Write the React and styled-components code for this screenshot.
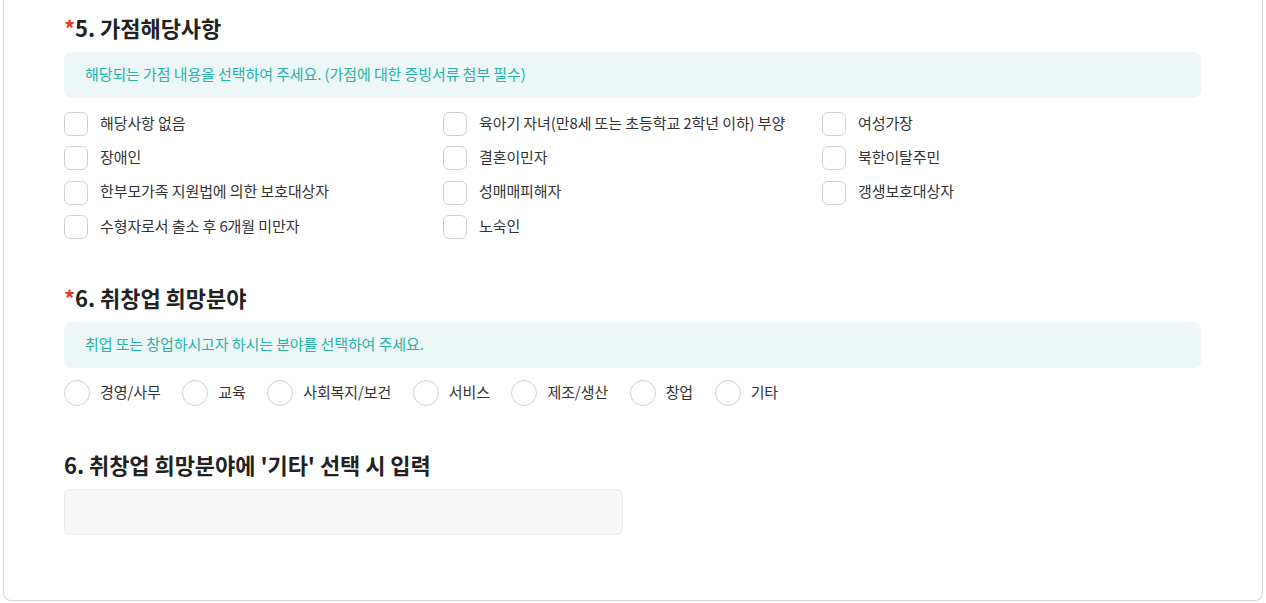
import React from 'react';
import styled, { createGlobalStyle } from 'styled-components';

const GlobalStyle = createGlobalStyle`
  * { box-sizing: border-box; }
  body {
    margin: 0;
    background: #ffffff;
    font-family: "Noto Sans CJK KR", "Noto Sans", sans-serif;
    color: #333333;
  }
`;

const Page = styled.div`
  padding: 0 3px;
`;

const Card = styled.div`
  width: 1260px;
  border: 1px solid #d6d6d6;
  border-top: none;
  border-radius: 0 0 8px 8px;
  padding: 12px 61px 65px 60px;
`;

const Section = styled.section`
  & + & {
    margin-top: 43px;
  }
`;

const Title = styled.h2`
  margin: 0 0 8px;
  font-size: 22px;
  line-height: 30px;
  padding-bottom: 2px;
  font-weight: 700;
  color: #222222;
  letter-spacing: -0.05px;
`;

const Required = styled.span`
  color: #e5392f;
  font-weight: 700;
`;

const Notice = styled.div`
  height: 46px;
  line-height: 44px;
  padding: 0 21px 2px;
  background: #edf7f8;
  border-radius: 7px;
  color: #26b3a5;
  font-size: 15px;
  letter-spacing: -0.1px;
`;

const CheckGrid = styled.div`
  margin-top: 14px;
  display: grid;
  grid-template-columns: repeat(3, 379px);
  grid-auto-rows: 24px;
  row-gap: 10.4px;
`;

const Option = styled.label`
  display: flex;
  align-items: center;
  gap: ${p => (p.$round ? '10px' : '12px')};
  font-size: 15px;
  letter-spacing: -0.1px;
  color: #333333;
  white-space: nowrap;
`;

const OptionText = styled.span`
  line-height: 20px;
  padding-bottom: 3px;
`;

const Box = styled.span`
  flex: none;
  width: ${p => (p.$round ? '26px' : '24px')};
  height: ${p => (p.$round ? '26px' : '24px')};
  border: 1px solid #d2d2d2;
  border-radius: ${p => (p.$round ? '50%' : '6px')};
  background: #ffffff;
`;

const RadioRow = styled.div`
  margin-top: 12px;
  display: flex;
  align-items: center;
  gap: 21.6px;
`;

const TextInput = styled.input`
  display: block;
  width: 559px;
  height: 46px;
  background: #f7f7f7;
  border: 1px solid #ebebeb;
  border-radius: 6px;
  padding: 0 16px;
  font: inherit;
  font-size: 15px;
  outline: none;
`;

const bonusItems = [
  '해당사항 없음',
  '육아기 자녀(만8세 또는 초등학교 2학년 이하) 부양',
  '여성가장',
  '장애인',
  '결혼이민자',
  '북한이탈주민',
  '한부모가족 지원법에 의한 보호대상자',
  '성매매피해자',
  '갱생보호대상자',
  '수형자로서 출소 후 6개월 미만자',
  '노숙인',
];

const fields = ['경영/사무', '교육', '사회복지/보건', '서비스', '제조/생산', '창업', '기타'];

export default function App() {
  return (
    <Page>
      <GlobalStyle />
      <Card>
        <Section>
          <Title><Required>*</Required>5. 가점해당사항</Title>
          <Notice>해당되는 가점 내용을 선택하여 주세요. (가점에 대한 증빙서류 첨부 필수)</Notice>
          <CheckGrid>
            {bonusItems.map(item => (
              <Option key={item}>
                <Box />
                <OptionText>{item}</OptionText>
              </Option>
            ))}
          </CheckGrid>
        </Section>

        <Section>
          <Title><Required>*</Required>6. 취창업 희망분야</Title>
          <Notice>취업 또는 창업하시고자 하시는 분야를 선택하여 주세요.</Notice>
          <RadioRow>
            {fields.map(f => (
              <Option key={f} $round>
                <Box $round />
                <OptionText>{f}</OptionText>
              </Option>
            ))}
          </RadioRow>
        </Section>

        <Section>
          <Title>6. 취창업 희망분야에 '기타' 선택 시 입력</Title>
          <TextInput type="text" />
        </Section>
      </Card>
    </Page>
  );
}
